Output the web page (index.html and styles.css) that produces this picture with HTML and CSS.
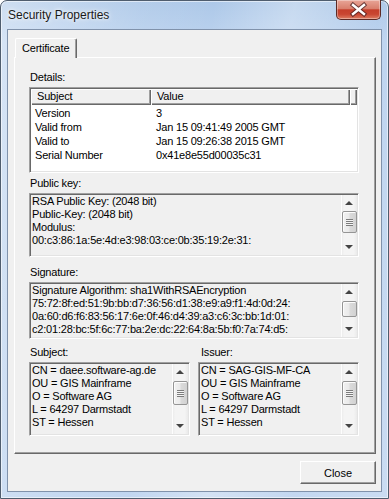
FILE: index.html
```html
<!DOCTYPE html>
<html>
<head>
<meta charset="utf-8">
<title>Security Properties</title>
<link rel="stylesheet" href="styles.css">
</head>
<body>
<div class="window">
  <div class="titlebar">
    <span class="title">Security Properties</span>
    <div class="caption-close">
      <svg width="45" height="20" viewBox="0 0 45 20">
        <path d="M17 5 L28 14 M28 5 L17 14" stroke="#4a2020" stroke-width="4.5" stroke-linecap="square" fill="none" opacity="0.75"/>
        <path d="M17 5 L28 14 M28 5 L17 14" stroke="#ffffff" stroke-width="2.4" stroke-linecap="square" fill="none"/>
      </svg>
    </div>
  </div>
  <div class="client">
    <div class="tabstrip"><div class="tab">Certificate</div></div>
    <div class="panel">
      <div class="label">Details:</div>
      <div class="listview">
        <div class="lv-head">
          <div class="th c1">Subject</div>
          <div class="th c2">Value</div>
          <div class="th c3"></div>
        </div>
        <div class="lv-row"><span class="td1">Version</span><span class="td2">3</span></div>
        <div class="lv-row"><span class="td1">Valid from</span><span class="td2">Jan 15 09:41:49 2005 GMT</span></div>
        <div class="lv-row"><span class="td1">Valid to</span><span class="td2">Jan 15 09:26:38 2015 GMT</span></div>
        <div class="lv-row"><span class="td1">Serial Number</span><span class="td2">0x41e8e55d00035c31</span></div>
      </div>

      <div class="label gap-pk">Public key:</div>
      <div class="textbox tb-pk">
        <div class="text">RSA Public Key: (2048 bit)<br>Public-Key: (2048 bit)<br>Modulus:<br>00:c3:86:1a:5e:4d:e3:98:03:ce:0b:35:19:2e:31:</div>
        <div class="scrollbar">
          <div class="sb-btn"><span class="arr-up"></span></div>
          <div class="sb-track">
            <div class="thumb th-pk"><span class="grip"></span></div>
          </div>
          <div class="sb-btn"><span class="arr-down"></span></div>
        </div>
      </div>

      <div class="label gap-sig">Signature:</div>
      <div class="textbox tb-sig">
        <div class="text">Signature Algorithm: sha1WithRSAEncryption<br>75:72:8f:ed:51:9b:bb:d7:36:56:d1:38:e9:a9:f1:4d:0d:24:<br>0a:60:d6:f6:83:56:17:6e:0f:46:d4:39:a3:c6:3c:bb:1d:01:<br>c2:01:28:bc:5f:6c:77:ba:2e:dc:22:64:8a:5b:f0:7a:74:d5:</div>
        <div class="scrollbar">
          <div class="sb-btn"><span class="arr-up"></span></div>
          <div class="sb-track">
            <div class="thumb th-sig"></div>
          </div>
          <div class="sb-btn"><span class="arr-down"></span></div>
        </div>
      </div>

      <div class="pair">
        <div class="col">
          <div class="label">Subject:</div>
          <div class="textbox tb-dn">
            <div class="text">CN = daee.software-ag.de<br>OU = GIS Mainframe<br>O = Software AG<br>L = 64297 Darmstadt<br>ST = Hessen</div>
            <div class="scrollbar">
              <div class="sb-btn"><span class="arr-up"></span></div>
              <div class="sb-track">
                <div class="thumb th-dn"><span class="grip"></span></div>
              </div>
              <div class="sb-btn"><span class="arr-down"></span></div>
            </div>
          </div>
        </div>
        <div class="col">
          <div class="label lbl-issuer">Issuer:</div>
          <div class="textbox tb-dn">
            <div class="text">CN = SAG-GIS-MF-CA<br>OU = GIS Mainframe<br>O = Software AG<br>L = 64297 Darmstadt<br>ST = Hessen</div>
            <div class="scrollbar">
              <div class="sb-btn"><span class="arr-up"></span></div>
              <div class="sb-track">
                <div class="thumb th-dn"><span class="grip"></span></div>
              </div>
              <div class="sb-btn"><span class="arr-down"></span></div>
            </div>
          </div>
        </div>
      </div>
    </div>
    <div class="footer"><button class="btn">Close</button></div>
  </div>
</div>
</body>
</html>
```

FILE: styles.css
```css
* { box-sizing: border-box; }
html, body { margin: 0; padding: 0; }
body {
  width: 389px;
  height: 499px;
  overflow: hidden;
  background: #ffffff;
  font-family: "Liberation Sans", Arial, sans-serif;
  font-size: 11px;
  letter-spacing: -0.2px;
  color: #000;
}

.window {
  width: 389px;
  height: 499px;
  border: 1px solid #4f5d6e;
  border-radius: 7px 7px 0 0;
  padding: 0 6px 6px 6px;
  display: flex;
  flex-direction: column;
  background:
    linear-gradient(100deg, rgba(255,255,255,0.4) 0%, rgba(255,255,255,0.08) 30%, rgba(255,255,255,0.0) 45%, rgba(255,255,255,0.3) 62%, rgba(255,255,255,0.03) 80%, rgba(255,255,255,0.15) 100%),
    linear-gradient(180deg, #adc8e8 0%, #bcd3ef 40px, #c1d6f0 100%);
  box-shadow: inset 0 0 0 1px rgba(255,255,255,0.55);
}

.titlebar {
  height: 28px;
  display: flex;
  align-items: flex-start;
}
.title {
  margin-top: 6px;
  margin-left: 1px;
  font-size: 12px;
  letter-spacing: 0;
  line-height: 16px;
  color: #1a1a1a;
  text-shadow: 0 0 6px rgba(255,255,255,0.9), 0 0 3px rgba(255,255,255,0.9);
}
.caption-close {
  margin-left: auto;
  margin-right: 1px;
  margin-top: -1px;
  width: 45px;
  height: 20px;
  border: 1px solid #5c2a25;
  border-top: none;
  border-radius: 0 0 5px 5px;
  background: linear-gradient(180deg, #e8a597 0%, #d97f6d 45%, #c53f2b 52%, #c94631 75%, #dd7d62 100%);
  box-shadow: inset 0 0 0 1px rgba(255,255,255,0.35);
  position: relative;
}
.caption-close svg {
  position: absolute;
  left: -1px;
  top: 0;
}

.client {
  border: 1px solid #8092ab;
  background: #f0f0f0;
  padding: 8px 5px 7px 6px;
  display: flex;
  flex-direction: column;
  height: 463px;
}

.tabstrip {
  height: 19px;
  display: flex;
}
.tab {
  position: relative;
  z-index: 1;
  margin-left: 1px;
  width: 62px;
  height: 20px;
  margin-bottom: -1px;
  background: #f0f0f0;
  border-top: 1px solid #ffffff;
  border-left: 1px solid #ffffff;
  border-right: 1px solid #696969;
  box-shadow: inset -1px 0 0 #a0a0a0;
  border-radius: 2px 2px 0 0;
  padding: 3px 0 0 6px;
  line-height: 13px;
}

.panel {
  height: 397px;
  border-top: 1px solid #ffffff;
  border-left: 1px solid #ffffff;
  border-right: 1px solid #696969;
  border-bottom: 1px solid #696969;
  box-shadow: inset -1px -1px 0 #a0a0a0;
  padding: 13px 16px 17px 14px;
  display: flex;
  flex-direction: column;
}

.label {
  height: 13px;
  line-height: 13px;
  margin-bottom: 3px;
  padding-left: 1px;
  white-space: nowrap;
}
.gap-pk { margin-top: 4px; }
.gap-sig { margin-top: 9px; }
.pair .label { margin-top: 7px; }
.pair .lbl-issuer { padding-left: 3px; }

.listview,
.textbox {
  border: 1px solid;
  border-color: #a0a0a0 #ffffff #ffffff #a0a0a0;
  box-shadow: inset 1px 1px 0 #696969, inset -1px -1px 0 #e3e3e3;
  padding: 1px;
}
.listview {
  height: 86px;
  background: #ffffff;
}
.lv-head {
  display: flex;
  height: 16px;
  margin-bottom: 1px;
}
.th {
  height: 16px;
  line-height: 15px;
  background: #f0f0f0;
  box-shadow: inset 1px 1px 0 #ffffff, inset -1px -1px 0 #696969, inset -2px -2px 0 #a0a0a0;
  padding-left: 6px;
  white-space: nowrap;
}
.th.c1 { width: 120px; }
.th.c2 { width: 199px; }
.th.c3 { flex: 1; padding: 0; }
.lv-row {
  display: flex;
  height: 14px;
  line-height: 14px;
  white-space: nowrap;
}
.td1 { width: 120px; padding-left: 4px; }
.td2 { padding-left: 5px; }

.textbox {
  background: #f0f0f0;
  display: flex;
  overflow: hidden;
}
.tb-pk { height: 64px; }
.tb-sig { height: 57px; }
.tb-dn { height: 74px; }
.text {
  flex: 1;
  min-width: 0;
  padding: 0 0 0 1px;
  line-height: 13px;
  white-space: nowrap;
  overflow: hidden;
}

.scrollbar {
  width: 16px;
  flex: none;
  display: flex;
  flex-direction: column;
  background: linear-gradient(90deg, #e9e9e9 0%, #f4f4f4 20%, #f4f4f4 80%, #eaeaea 100%);
  box-shadow: inset 1px 0 0 #fdfdfd;
}
.sb-btn {
  height: 16px;
  flex: none;
  display: flex;
  align-items: center;
  justify-content: center;
}
.sb-track {
  flex: 1;
  display: flex;
  flex-direction: column;
}
.arr-up {
  width: 0; height: 0;
  border-left: 4px solid transparent;
  border-right: 4px solid transparent;
  border-bottom: 4px solid #444;
}
.arr-down {
  width: 0; height: 0;
  border-left: 4px solid transparent;
  border-right: 4px solid transparent;
  border-top: 4px solid #444;
}
.thumb {
  margin: 0 0 0 1px;
  width: 15px;
  border: 1px solid #959595;
  border-radius: 2px;
  background: linear-gradient(90deg, #f2f2f2 0%, #eaeaea 45%, #dadada 55%, #d2d2d2 100%);
  box-shadow: inset 1px 1px 0 #fcfcfc;
  display: flex;
  align-items: center;
  justify-content: center;
}
.th-pk { height: 22px; }
.th-sig { height: 16px; margin-top: 1px; }
.th-dn { height: 24px; margin-top: 1px; }
.grip {
  width: 7px;
  height: 7px;
  background: repeating-linear-gradient(180deg, #7c7c7c 0 1px, #f4f4f4 1px 2px);
}

.pair {
  display: flex;
  gap: 8px;
}
.col {
  width: 161px;
  display: flex;
  flex-direction: column;
}

.footer {
  margin-top: 7px;
  display: flex;
  justify-content: flex-end;
}
.btn {
  width: 76px;
  height: 23px;
  margin: 0;
  padding: 0;
  font-family: "Liberation Sans", Arial, sans-serif;
  font-size: 11px;
  color: #000;
  background: #f0f0f0;
  border: 1px solid;
  border-color: #ffffff #696969 #696969 #ffffff;
  box-shadow: inset -1px -1px 0 #a0a0a0;
  border-radius: 0;
}
```
